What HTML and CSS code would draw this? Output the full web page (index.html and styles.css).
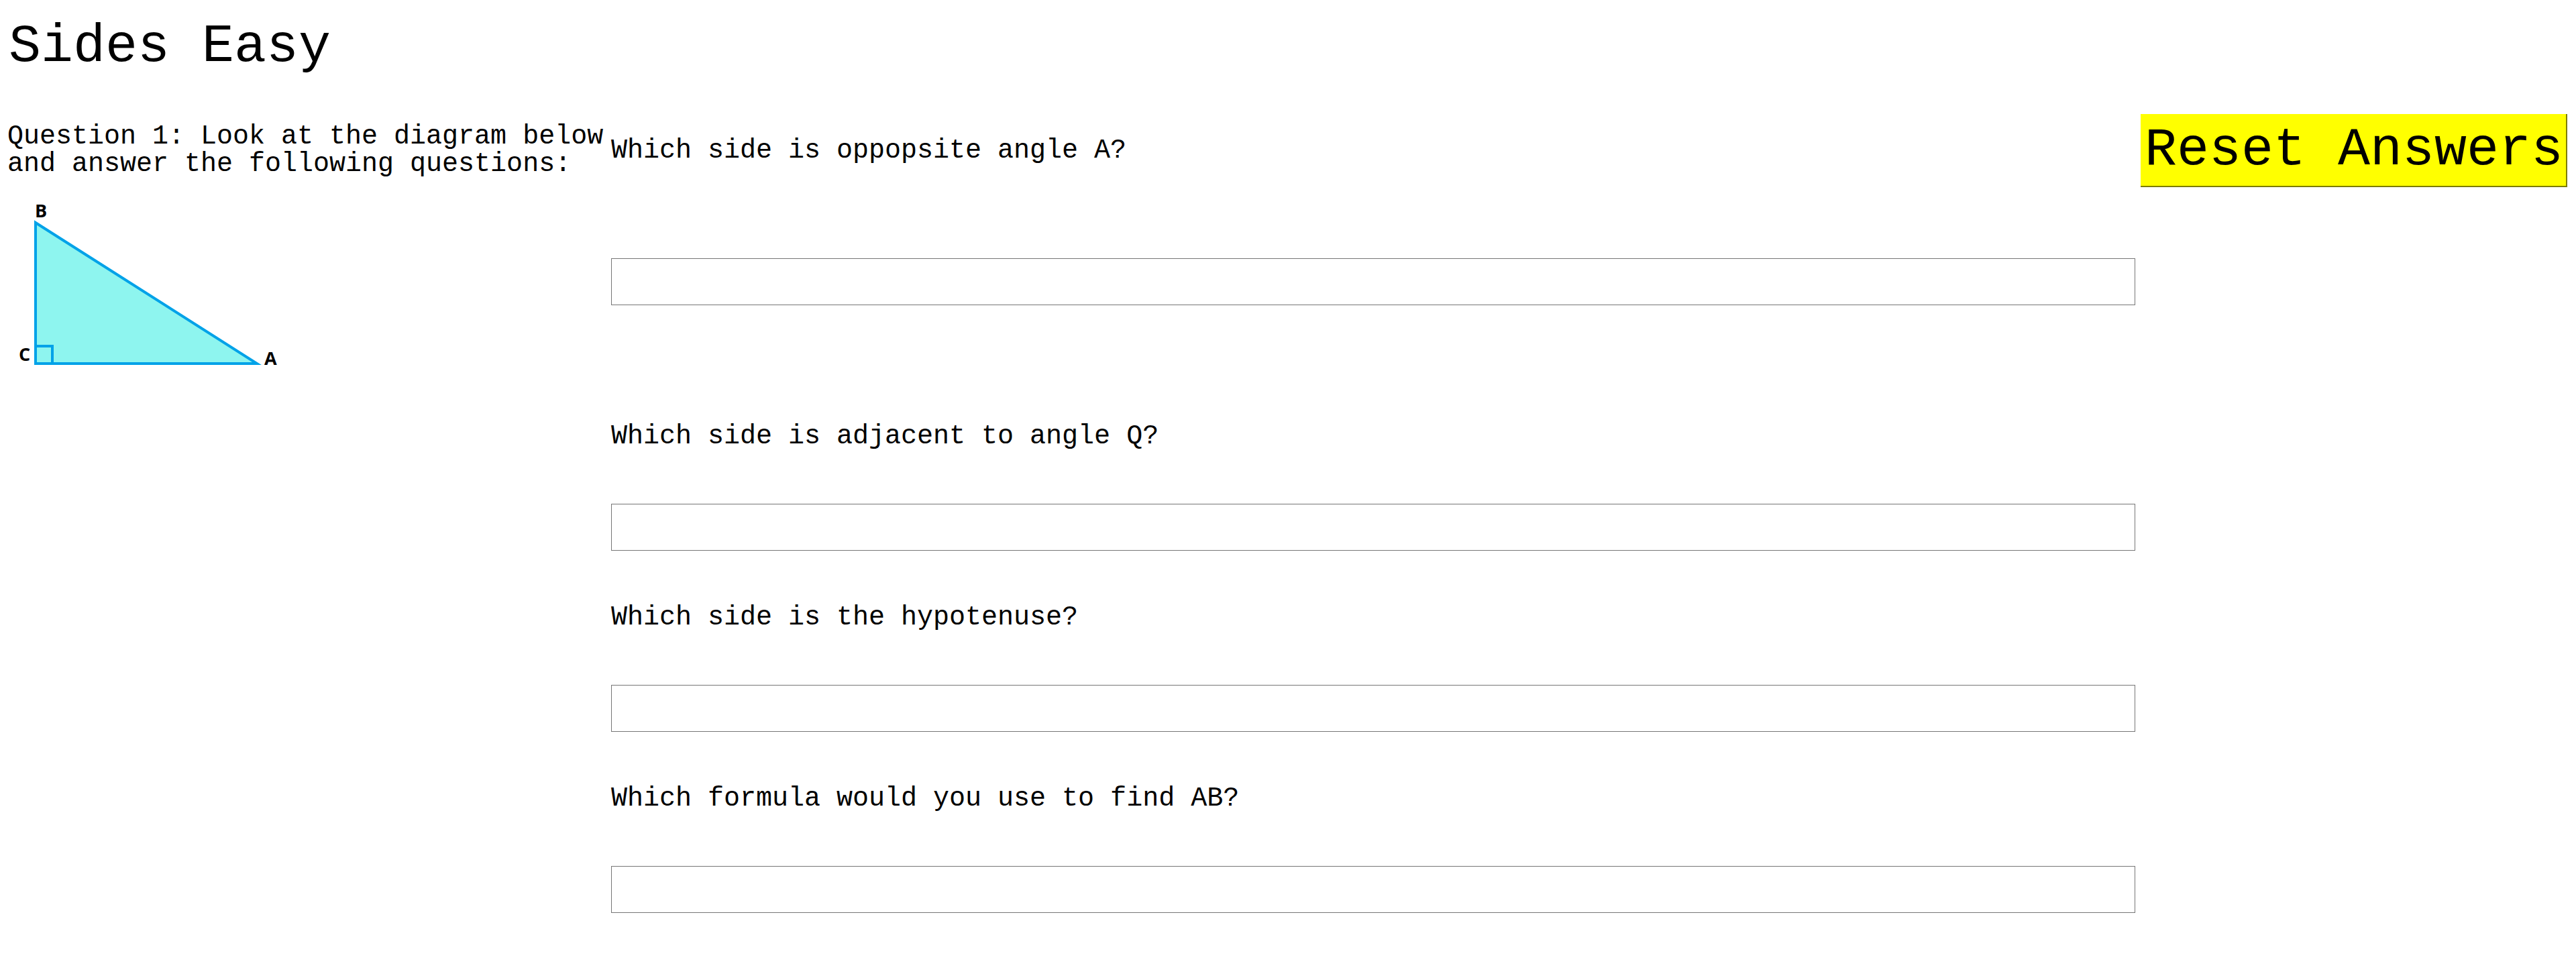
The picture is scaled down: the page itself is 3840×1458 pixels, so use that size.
FILE: index.html
```html
<!DOCTYPE html>
<html lang="en">
<head>
<meta charset="utf-8">
<title>Sides Easy</title>
<link rel="stylesheet" href="styles.css">
</head>
<body>
<h1 class="title">Sides Easy</h1>
<div class="layout">
  <div class="intro">
    <p class="intro-text">Question 1: Look at the diagram below and answer the following questions:</p>
    <svg class="diagram" width="420" height="270" viewBox="0 0 420 270" xmlns="http://www.w3.org/2000/svg">
      <polygon points="42,42 42,252 372,252" fill="#8ef5ef" stroke="#00a2e8" stroke-width="4" stroke-linejoin="miter"/>
      <polyline points="42,226 67,226 67,252" fill="none" stroke="#00a2e8" stroke-width="4"/>
      <text class="lbl" x="41" y="34">B</text>
      <text class="lbl" x="17" y="248">C</text>
      <text class="lbl" x="383" y="254">A</text>
    </svg>
  </div>
  <div class="questions">
    <div class="q q-first">
      <p class="q-label">Which side is oppopsite angle A?</p>
      <input class="answer" type="text">
    </div>
    <div class="q">
      <p class="q-label">Which side is adjacent to angle Q?</p>
      <input class="answer" type="text">
    </div>
    <div class="q">
      <p class="q-label">Which side is the hypotenuse?</p>
      <input class="answer" type="text">
    </div>
    <div class="q">
      <p class="q-label">Which formula would you use to find AB?</p>
      <input class="answer" type="text">
    </div>
  </div>
  <div class="actions">
    <button class="reset" type="button">Reset Answers</button>
  </div>
</div>
</body>
</html>
```
FILE: styles.css
```css
html, body {
  margin: 0;
  padding: 0;
  background: #ffffff;
}

body {
  font-family: "Liberation Mono", "Courier New", monospace;
  color: #000000;
  font-size: 40px;
}

.title {
  margin: 0;
  padding: 24px 0 0 13px;
  font-size: 80px;
  font-weight: normal;
  line-height: normal;
}

.layout {
  display: grid;
  grid-template-columns: 896px 2272px 636px;
  column-gap: 4px;
  align-items: start;
  margin-top: 55px;
  padding-left: 11px;
}

.intro {
  padding-top: 13px;
}

.intro-text {
  margin: 0;
  font-size: 40px;
  line-height: 41px;
}

.diagram {
  display: block;
  margin-top: 25px;
}

.lbl {
  font-family: "Open Sans", "Liberation Sans", sans-serif;
  font-weight: 700;
  font-size: 27px;
  fill: #000000;
}

.questions {
  padding-top: 32px;
}

.q {
  display: flex;
  flex-direction: column;
  align-items: flex-start;
  margin-bottom: 77px;
}

.q-first {
  margin-bottom: 173px;
}

.q-label {
  margin: 0 0 78px 0;
  font-size: 40px;
  line-height: normal;
}

.q-first .q-label {
  margin-bottom: 138px;
}

.answer {
  box-sizing: border-box;
  width: 2272px;
  height: 70px;
  margin: 0;
  border: 1px solid #767676;
  border-radius: 0;
  background: #ffffff;
  padding: 0 4px;
  font-family: "Liberation Mono", "Courier New", monospace;
  font-size: 40px;
  outline: none;
}

.actions {
  margin-left: 4px;
}

.reset {
  box-sizing: border-box;
  width: 636px;
  height: 109px;
  margin: 0;
  padding: 8px 4px 8px 6px;
  background: #ffff00;
  border-style: solid;
  border-width: 0 2px 2px 0;
  border-color: #7d7d00;
  border-radius: 0;
  font-family: "Liberation Mono", "Courier New", monospace;
  font-size: 80px;
  line-height: normal;
  color: #000000;
  text-align: left;
  white-space: nowrap;
  cursor: pointer;
}
```
